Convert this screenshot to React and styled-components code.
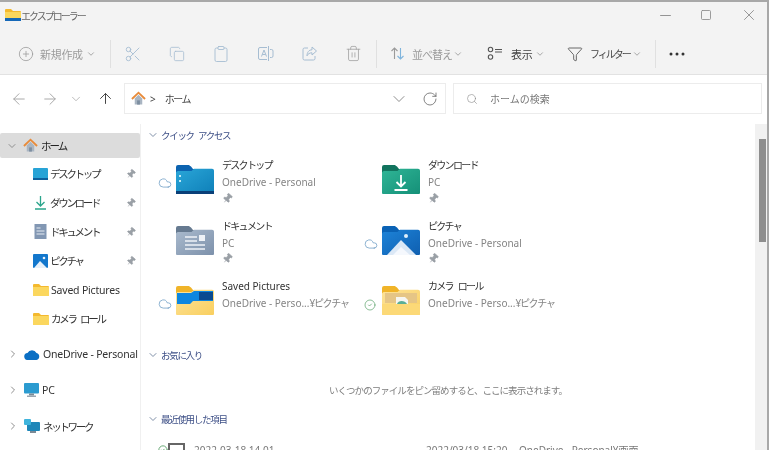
import React from 'react';
import styled, { createGlobalStyle } from 'styled-components';
import {
  ArrowLeft, ArrowRight, ArrowUp, ChevronDown, ChevronRight, CircleCheck, CirclePlus,
  Cloud, Clipboard, Copy, Funnel, Minus, Pin, RotateCw, Scissors, Search, Square, Trash2, X,
} from 'lucide-react';

const GlobalStyle = createGlobalStyle`
  html, body { margin: 0; padding: 0; background: #fff; overflow: hidden; }
  body { font-family: "Noto Sans", "Noto Sans CJK JP", sans-serif; }
`;

const Page = styled.div`
  width: 773px;
  height: 450px;
  background: #fff;
  overflow: hidden;
  filter: blur(0.35px);
`;

const Win = styled.div`
  width: 769px;
  height: 450px;
  box-sizing: border-box;
  border-top: 2px solid #a8a8a8;
  border-right: 2px solid #a8a8a8;
  display: flex;
  flex-direction: column;
  overflow: hidden;
`;

const TitleBar = styled.div`
  height: 31px;
  flex: none;
  box-sizing: border-box;
  background: #f3f3f3;
  display: flex;
  align-items: center;
  padding: 0 3px 5px 5px;
  font-size: 10px;
  letter-spacing: -2px;
  color: #666;
`;

const TitleText = styled.span`
  flex: 1;
`;

const WinButton = styled.div`
  width: 30px;
  margin-left: ${p => p.$l || 0}px;
  display: flex;
  justify-content: center;
  color: #8c8c8c;
`;

const Toolbar = styled.div`
  height: 42px;
  flex: none;
  box-sizing: border-box;
  background: #f3f3f3;
  border-bottom: 1px solid #e2e2e2;
  display: flex;
  align-items: center;
  padding-left: 18px;
`;

const ToolButton = styled.div`
  display: flex;
  align-items: center;
  width: ${p => p.$w}px;
  flex: none;
  margin-left: ${p => p.$l || 0}px;
  font-size: ${p => p.$size || 11}px;
  letter-spacing: ${p => p.$track || -0.3}px;
  white-space: nowrap;
  color: ${p => (p.$off ? '#9c9c9c' : '#444')};
  svg { flex: none; }
  svg:first-child { margin-right: ${p => p.$gap || 6}px; }
  svg.caret { margin-left: auto; color: #999; }
`;

const IconButton = styled.div`
  width: 44px;
  display: flex;
  justify-content: center;
  color: ${p => p.$c || '#a6bdd2'};
`;

const ToolSep = styled.div`
  width: 1px;
  height: 28px;
  flex: none;
  background: #e0e0e0;
  margin: 0 ${p => p.$r || 0}px 0 ${p => p.$l || 0}px;
`;

const AddressRow = styled.div`
  height: 47px;
  flex: none;
  background: #fff;
  display: flex;
  align-items: center;
  padding: 0 4px 2px 0;
`;

const NavButton = styled.div`
  width: ${p => p.$w}px;
  display: flex;
  justify-content: center;
  color: ${p => p.$c || '#a0a0a0'};
`;

const AddressBox = styled.div`
  height: 31px;
  box-sizing: border-box;
  width: ${p => p.$w}px;
  margin-left: ${p => p.$l || 0}px;
  border: 1px solid #ececec;
  display: flex;
  align-items: center;
  font-size: 10px;
  color: #444;
  padding-left: ${p => p.$pad}px;
`;

const Crumb = styled.span`
  margin: 0 ${p => p.$r || 0}px 0 ${p => p.$l || 0}px;
  flex: ${p => (p.$grow ? 1 : 'none')};
  color: ${p => p.$c || '#444'};
  letter-spacing: ${p => p.$track || 0}px;
`;

const Main = styled.div`
  flex: 1;
  min-height: 0;
  display: flex;
`;

const Sidebar = styled.nav`
  width: 141px;
  flex: none;
  box-sizing: border-box;
  border-right: 1px solid #f0f0f0;
  padding-top: 9px;
  font-size: 10.5px;
  color: #333;
`;

const HomeRow = styled.div`
  width: 140px;
  height: 25px;
  background: #dcdcdc;
  border-radius: 2px;
  display: flex;
  align-items: center;
  gap: 3px;
  padding-left: 6px;
  box-sizing: border-box;
  color: #222;
  letter-spacing: -2px;
  margin-bottom: 1px;
`;

const NavItem = styled.div`
  height: 29px;
  display: flex;
  align-items: center;
  padding-left: 33px;
  padding-right: 4px;
  gap: 2px;
  svg { flex: none; }
`;

const NavLabel = styled.span`
  flex: ${p => (p.$fill ? 1 : 'none')};
  white-space: nowrap;
  letter-spacing: ${p => (p.$kana ? -2.3 : -0.2)}px;
  word-spacing: ${p => (p.$kana ? 4 : 0)}px;
`;

const RootItem = styled.div`
  height: 36px;
  display: flex;
  align-items: center;
  padding-left: 7px;
  gap: 3px;
  color: #333;
  svg { flex: none; }
`;

const RootGroup = styled.div`
  margin-top: 3px;
`;

const Chevron = styled.span`
  display: flex;
  width: 12px;
  margin-right: 2px;
  color: #8f8f8f;
`;

const Content = styled.div`
  flex: 1;
  min-width: 0;
  padding: 2px 0 0 6px;
  overflow: hidden;
`;

const SectionTitle = styled.div`
  height: 18px;
  display: flex;
  align-items: center;
  gap: 2px;
  font-size: 9.5px;
  letter-spacing: -1.3px;
  word-spacing: 3px;
  color: #3d4f86;
  margin-top: ${p => p.$top || 0}px;
  svg { color: #8090a8; }
`;

const Grid = styled.div`
  display: grid;
  grid-template-columns: 206px 206px;
  grid-auto-rows: 60.5px;
  margin-top: 13px;
  padding-left: 9px;
`;

const Card = styled.div`
  display: flex;
  align-items: flex-start;
`;

const Status = styled.div`
  width: 19px;
  box-sizing: border-box;
  padding-left: 2px;
  flex: none;
  margin-top: 16px;
  color: ${p => (p.$ok ? '#4e9a5e' : '#6b9cc4')};
`;

const Thumb = styled.div`
  width: 40px;
  flex: none;
  margin-top: 7px;
  margin-right: 7px;
`;

const CardText = styled.div`
  display: flex;
  flex-direction: column;
  font-size: 10px;
  line-height: 17px;
  white-space: nowrap;
`;

const CardName = styled.div`
  color: #333;
  letter-spacing: ${p => (p.$kana ? -1.7 : 0)}px;
  word-spacing: ${p => (p.$kana ? 4 : 0)}px;
`;

const CardSub = styled.div`
  color: #858585;
`;

const Narrow = styled.span`
  letter-spacing: -1.3px;
`;

const PinMark = styled.div`
  height: 14px;
  color: #9aa0a6;
  display: flex;
  align-items: center;
`;

const EmptyNote = styled.div`
  margin-top: 19px;
  height: 17px;
  font-size: 9.5px;
  letter-spacing: -0.95px;
  color: #7d7d7d;
  text-align: center;
  padding-right: 6px;
`;

const RecentRow = styled.div`
  display: flex;
  align-items: center;
  margin-top: 14px;
  padding-left: 11px;
  height: 16px;
  font-size: 10px;
  color: #777;
  white-space: nowrap;
  svg { color: #4e9a5e; flex: none; }
`;

const RecentThumb = styled.div`
  width: 17px;
  height: 14px;
  flex: none;
  box-sizing: border-box;
  border: 2px solid #666;
  margin-right: 9px;
`;

const RecentCell = styled.span`
  width: ${p => p.$w}px;
  flex: none;
`;

const Scrollbar = styled.div`
  width: 12px;
  flex: none;
  background: #f1f1f1;
  box-sizing: border-box;
  padding-left: 4px;
`;

const Thumbbar = styled.div`
  width: 7px;
  height: 103px;
  margin-top: 15px;
  background: #8e8e8e;
`;

/* ---- drawings ---- */

const Folder = ({ id, tab, from, to, children }) => (
  <svg width="40" height="31" viewBox="0 0 40 31">
    <defs>
      <linearGradient id={id} x1="0" y1="0" x2="1" y2="1">
        <stop offset="0" stopColor={from} />
        <stop offset="1" stopColor={to} />
      </linearGradient>
    </defs>
    <path d="M1 8V3a2 2 0 0 1 2-2h10c1.200 0 2 .6 3 1.600L18 5h20v5H1z" fill={tab} />
    <path d="M1 9c0-1 .8-2 2-2h13.500L19 4.800h18c1.200 0 2 .8 2 2V29a1 1 0 0 1-1 1H2a1 1 0 0 1-1-1z" fill={`url(#${id})`} />
    {children}
  </svg>
);

const DesktopFolder = () => (
  <Folder id="fdesk" tab="#0c63b0" from="#2aa6d8" to="#0e7fb8">
    <rect x="4" y="11" width="2" height="2" fill="#bfe8f5" />
    <rect x="4" y="16" width="2" height="2" fill="#bfe8f5" />
    <rect x="1" y="27" width="38" height="3" fill="#0a3f78" />
  </Folder>
);

const DownloadFolder = () => (
  <Folder id="fdown" tab="#12745e" from="#2fb596" to="#159078">
    <path d="M20 11v11M15.500 18l4.500 4.500 4.500-4.500M13.500 26h13" fill="none" stroke="#fff" strokeWidth="1.800" />
  </Folder>
);

const DocFolder = () => (
  <Folder id="fdoc" tab="#667a90" from="#a9bacd" to="#7d91ab">
    <path d="M10 12h12M10 16h12M10 20h20M10 24h20" stroke="#eef2f7" strokeWidth="1.500" />
    <rect x="24" y="10" width="6" height="6" fill="#eef2f7" />
  </Folder>
);

const PictureFolder = () => (
  <Folder id="fpic" tab="#0a62b5" from="#1d83d8" to="#0f5fb0">
    <circle cx="25" cy="11" r="2" fill="#dff0fb" />
    <path d="M6 30l14-15 15 15z" fill="#dbe8f6" />
    <path d="M12 30l8-8 9 8z" fill="#f5f8fd" />
  </Folder>
);

const SavedFolder = () => (
  <Folder id="fsave" tab="#f0b429" from="#fde39a" to="#f9cf5f">
    <path d="M2 8h14l3-2h19v10H18l-3 3H2z" fill="#0c86e0" />
    <path d="M24 7h14v8H24z" fill="#0a4a90" />
  </Folder>
);

const CameraFolder = () => (
  <Folder id="fcam" tab="#f0b429" from="#fde39a" to="#f9cf5f">
    <path d="M4 8h32v10H4z" fill="#e5c586" />
    <path d="M15 19v-7h9l3 3v4z" fill="#f6f6f2" />
    <path d="M16 19c1-4 8-4 10 0z" fill="#5aae96" />
    <path d="M1 19h38v10a1 1 0 0 1-1 1H2a1 1 0 0 1-1-1z" fill="#fcd977" />
  </Folder>
);

const AppFolder = () => (
  <svg width="16" height="14" viewBox="0 0 16 14">
    <path d="M0 2a1 1 0 0 1 1-1h5l2 2h7a1 1 0 0 1 1 1v9H0z" fill="#f4b92f" />
    <rect y="4" width="16" height="9" fill="#fbd75e" />
    <rect y="10" width="16" height="3" fill="#1568b8" />
  </svg>
);

const PlainFolder = () => (
  <svg width="16" height="14" viewBox="0 0 16 14">
    <path d="M0 2a1 1 0 0 1 1-1h5l2 2h7a1 1 0 0 1 1 1v9H0z" fill="#f4b92f" />
    <rect y="4" width="16" height="9" fill="#fbd75e" />
  </svg>
);

const HomeGlyph = ({ size = 15 }) => (
  <svg width={size} height={size} viewBox="0 0 16 16">
    <path d="M4 8v6.500h8V8L8 4z" fill="#a9b5c2" />
    <rect x="6.500" y="10" width="3" height="4.500" fill="#7d8ea0" />
    <path d="M1 8.500L8 1.800l7 6.700" fill="none" stroke="#e88b3a" strokeWidth="2" />
  </svg>
);

const RenameIcon = () => (
  <svg width="17" height="17" viewBox="0 0 17 17" fill="none" stroke="currentColor" strokeWidth="1">
    <path d="M10 2.500H3a1.500 1.500 0 0 0-1.500 1.500v9A1.500 1.500 0 0 0 3 14.500h7" />
    <path d="M13 4.500h1.500A1.500 1.500 0 0 1 16 6v5a1.500 1.500 0 0 1-1.500 1.500H13" />
    <path d="M11.500 1v15M4.500 11.500L7 5l2.500 6.500M5.400 9.500h3.200" />
  </svg>
);

const ShareIcon = () => (
  <svg width="17" height="17" viewBox="0 0 17 17" fill="none" stroke="currentColor" strokeWidth="1">
    <path d="M7 3H3.500A1.500 1.500 0 0 0 2 4.500v9A1.500 1.500 0 0 0 3.500 15h9a1.500 1.500 0 0 0 1.500-1.500V11" />
    <path d="M11 2l4.500 4L11 10V7.800c-2.500 0-4 1-5 3 0-3.500 2-6 5-6z" />
  </svg>
);

const SortIcon = () => (
  <svg width="15" height="15" viewBox="0 0 15 15" fill="none" strokeWidth="1.100">
    <path d="M4.500 13V2M1.500 5l3-3 3 3" stroke="#9a9a9a" />
    <path d="M10.500 2v11M7.500 10l3 3 3-3" stroke="#7fb4dc" />
  </svg>
);

const ViewIcon = () => (
  <svg width="16" height="15" viewBox="0 0 16 15" fill="none" stroke="#555" strokeWidth="1.100">
    <circle cx="3.500" cy="3.500" r="2.200" />
    <circle cx="3.500" cy="11" r="2.200" />
    <path d="M8 3.500h7M8 6h7" />
  </svg>
);

const MoreDots = () => (
  <svg width="16" height="4" viewBox="0 0 16 4" fill="#333">
    <circle cx="2" cy="2" r="1.500" />
    <circle cx="8" cy="2" r="1.500" />
    <circle cx="14" cy="2" r="1.500" />
  </svg>
);

const DesktopMini = () => (
  <svg width="15" height="12" viewBox="0 0 15 12">
    <rect width="15" height="12" rx="1" fill="#27a3d6" />
    <rect y="10" width="15" height="2" fill="#0d5f9c" />
  </svg>
);

const DownloadMini = () => (
  <svg width="15" height="15" viewBox="0 0 15 15" fill="none" stroke="#2ba58c" strokeWidth="1.300">
    <path d="M7.500 1v9.500M3.500 7l4 4 4-4M2 14h11" />
  </svg>
);

const DocMini = () => (
  <svg width="15" height="15" viewBox="0 0 15 15">
    <rect x="1.500" width="12" height="15" fill="#8297b3" />
    <path d="M3.500 4h4M3.500 7h8M3.500 10h8" stroke="#e6ecf3" />
  </svg>
);

const PictureMini = () => (
  <svg width="15" height="14" viewBox="0 0 15 14">
    <rect width="15" height="14" rx="1" fill="#1377cc" />
    <path d="M1 14l6-7 7 7z" fill="#e7f1fa" />
    <circle cx="11" cy="4" r="1.300" fill="#e7f1fa" />
  </svg>
);

const CloudMini = () => (
  <svg width="16" height="11" viewBox="0 0 16 11">
    <path d="M4 11a3.500 3.500 0 0 1-.5-7A5 5 0 0 1 12.500 4 3.600 3.600 0 0 1 12.500 11z" fill="#0a6fc4" />
  </svg>
);

const PcMini = () => (
  <svg width="15" height="14" viewBox="0 0 15 14">
    <rect width="15" height="10.500" rx="1" fill="#2b9bd0" />
    <rect x="5" y="10.500" width="5" height="2" fill="#7b8a96" />
    <rect x="3" y="12.500" width="9" height="1.500" fill="#9aa6b0" />
  </svg>
);

const NetworkMini = () => (
  <svg width="16" height="14" viewBox="0 0 16 14">
    <rect x="3" y="3" width="13" height="9" rx="1" fill="#1e86b8" />
    <rect x="0" y="0" width="7" height="6" rx="1" fill="#3fb4dc" />
    <rect x="6" y="12" width="6" height="2" fill="#7b8a96" />
  </svg>
);

const PinGlyph = ({ size = 11 }) => (
  <Pin size={size} strokeWidth={1.500} fill="currentColor" style={{ transform: 'rotate(40deg)' }} />
);

/* ---- data ---- */

const pinnedNav = [
  { label: 'デスクトップ', icon: <DesktopMini />, pin: true, kana: true },
  { label: 'ダウンロード', icon: <DownloadMini />, pin: true, kana: true },
  { label: 'ドキュメント', icon: <DocMini />, pin: true, kana: true },
  { label: 'ピクチャ', icon: <PictureMini />, pin: true, kana: true },
  { label: 'Saved Pictures', icon: <PlainFolder /> },
  { label: 'カメラ ロール', icon: <PlainFolder />, kana: true },
];

const rootNav = [
  { label: 'OneDrive - Personal', icon: <CloudMini /> },
  { label: 'PC', icon: <PcMini /> },
  { label: 'ネットワーク', icon: <NetworkMini />, kana: true },
];

const quickAccess = [
  { name: 'デスクトップ', sub: 'OneDrive - Personal', icon: <DesktopFolder />, status: 'cloud', pin: true, kana: true },
  { name: 'ダウンロード', sub: 'PC', icon: <DownloadFolder />, pin: true, kana: true },
  { name: 'ドキュメント', sub: 'PC', icon: <DocFolder />, pin: true, kana: true },
  { name: 'ピクチャ', sub: 'OneDrive - Personal', icon: <PictureFolder />, status: 'cloud', pin: true, kana: true },
  { name: 'Saved Pictures', sub: 'OneDrive - Perso...', tail: '¥ピクチャ', icon: <SavedFolder />, status: 'cloud' },
  { name: 'カメラ ロール', sub: 'OneDrive - Perso...', tail: '¥ピクチャ', icon: <CameraFolder />, status: 'ok', kana: true },
];

const App = () => (
  <Page>
    <GlobalStyle />
    <Win>
      <TitleBar>
        <AppFolder />
        <TitleText>エクスプローラー</TitleText>
        <WinButton><Minus size={17} strokeWidth={1.300} /></WinButton>
        <WinButton $l={11}><Square size={12} strokeWidth={1.700} /></WinButton>
        <WinButton $l={13}><X size={18} strokeWidth={1.200} /></WinButton>
      </TitleBar>

      <Toolbar>
        <ToolButton $w={78} $off>
          <CirclePlus size={16} strokeWidth={1.200} />
          新規作成
          <ChevronDown className="caret" size={10} />
        </ToolButton>
        <ToolSep $l={14} />
        <IconButton><Scissors size={18} strokeWidth={1.200} /></IconButton>
        <IconButton><Copy size={16} strokeWidth={1.200} /></IconButton>
        <IconButton><Clipboard size={18} strokeWidth={1.200} /></IconButton>
        <IconButton><RenameIcon /></IconButton>
        <IconButton><ShareIcon /></IconButton>
        <IconButton $c="#a5a5a5"><Trash2 size={17} strokeWidth={1.200} /></IconButton>
        <ToolSep $l={1} $r={13} />
        <ToolButton $w={73} $gap={7} $track={-1} $off>
          <SortIcon />
          並べ替え
          <ChevronDown className="caret" size={10} />
        </ToolButton>
        <ToolButton $w={58} $gap={8} $l={24}>
          <ViewIcon />
          表示
          <ChevronDown className="caret" size={10} />
        </ToolButton>
        <ToolButton $w={75} $gap={7} $l={22} $size={10} $track={-2}>
          <Funnel size={16} strokeWidth={1.200} />
          フィルター
          <ChevronDown className="caret" size={10} />
        </ToolButton>
        <ToolSep $l={13} $r={13} />
        <MoreDots />
      </Toolbar>

      <AddressRow>
        <NavButton $w={38}><ArrowLeft size={18} strokeWidth={1.200} /></NavButton>
        <NavButton $w={24}><ArrowRight size={18} strokeWidth={1.200} /></NavButton>
        <NavButton $w={28}><ChevronDown size={14} strokeWidth={1.200} /></NavButton>
        <NavButton $w={30} $c="#444"><ArrowUp size={17} strokeWidth={1.400} /></NavButton>
        <AddressBox $w={322} $l={4} $pad={6}>
          <HomeGlyph />
          <Crumb $l={4} $r={9}>&gt;</Crumb>
          <Crumb $grow $track={-1.500}>ホーム</Crumb>
          <NavButton $w={32} $c="#777"><ChevronDown size={20} strokeWidth={1} /></NavButton>
          <NavButton $w={30} $c="#666"><RotateCw size={16} strokeWidth={1.200} /></NavButton>
        </AddressBox>
        <AddressBox $w={309} $l={7} $pad={12}>
          <Search size={12} strokeWidth={1.200} color="#888" />
          <Crumb $l={12} $c="#777">ホームの検索</Crumb>
        </AddressBox>
      </AddressRow>

      <Main>
        <Sidebar>
          <HomeRow>
            <Chevron><ChevronDown size={12} /></Chevron>
            <HomeGlyph />
            ホーム
          </HomeRow>
          {pinnedNav.map(item => (
            <NavItem key={item.label}>
              {item.icon}
              <NavLabel $fill $kana={item.kana}>{item.label}</NavLabel>
              {item.pin && <PinMark><PinGlyph size={10} /></PinMark>}
            </NavItem>
          ))}
          <RootGroup>
            {rootNav.map(item => (
              <RootItem key={item.label}>
                <Chevron><ChevronRight size={12} /></Chevron>
                {item.icon}
                <NavLabel $kana={item.kana}>{item.label}</NavLabel>
              </RootItem>
            ))}
          </RootGroup>
        </Sidebar>

        <Content>
          <SectionTitle><ChevronDown size={12} />クイック アクセス</SectionTitle>
          <Grid>
            {quickAccess.map(card => (
              <Card key={card.name}>
                <Status $ok={card.status === 'ok'}>
                  {card.status === 'cloud' && <Cloud size={14} strokeWidth={1.300} />}
                  {card.status === 'ok' && <CircleCheck size={12} strokeWidth={1.300} />}
                </Status>
                <Thumb>{card.icon}</Thumb>
                <CardText>
                  <CardName $kana={card.kana}>{card.name}</CardName>
                  <CardSub>{card.sub}{card.tail && <Narrow>{card.tail}</Narrow>}</CardSub>
                  {card.pin && <PinMark><PinGlyph /></PinMark>}
                </CardText>
              </Card>
            ))}
          </Grid>
          <SectionTitle $top={7}><ChevronDown size={12} />お気に入り</SectionTitle>
          <EmptyNote>いくつかのファイルをピン留めすると、ここに表示されます。</EmptyNote>
          <SectionTitle $top={10}><ChevronDown size={12} />最近使用した項目</SectionTitle>
          <RecentRow>
            <CircleCheck size={10} />
            <RecentThumb />
            <RecentCell $w={232}>2022-03-18 14.01</RecentCell>
            <RecentCell $w={93}>2022/03/18 15:20</RecentCell>
            <RecentCell $w={130}>OneDrive - Personal¥画面</RecentCell>
          </RecentRow>
        </Content>

        <Scrollbar><Thumbbar /></Scrollbar>
      </Main>
    </Win>
  </Page>
);

export default App;
